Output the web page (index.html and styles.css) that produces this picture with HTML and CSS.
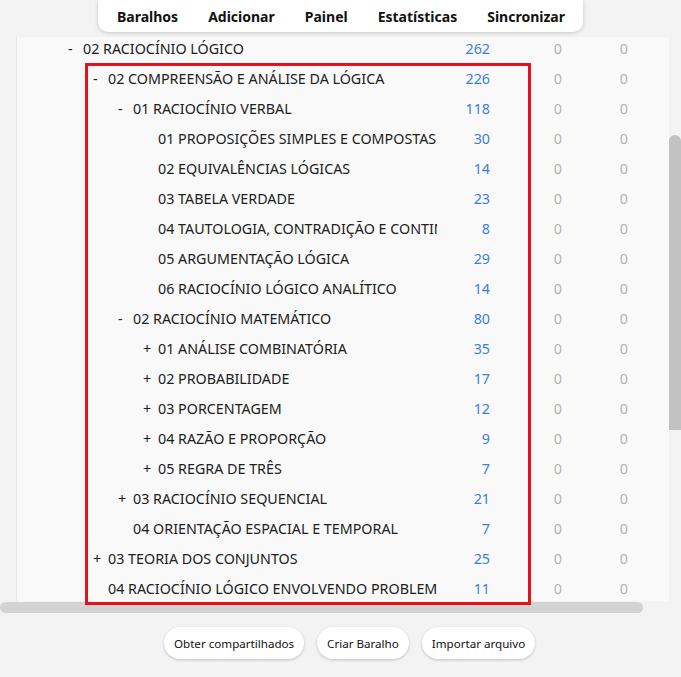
FILE: index.html
```html
<!DOCTYPE html>
<html lang="pt-BR">
<head>
<meta charset="UTF-8">
<meta name="viewport" content="width=device-width, initial-scale=1.0">
<title>Baralhos</title>
<link rel="stylesheet" href="styles.css">
</head>
<body>
<div class="page">
    <div class="main">
        <div class="topbar">
            <nav class="nav">
                <a class="nav-item">Baralhos</a>
                <a class="nav-item">Adicionar</a>
                <a class="nav-item">Painel</a>
                <a class="nav-item">Estatísticas</a>
                <a class="nav-item">Sincronizar</a>
            </nav>
        </div>

        <div class="panel">
            <div class="deck-list">
                <div class="deck-row d1"><span class="name"><span class="exp">-</span>02 RACIOCÍNIO LÓGICO</span><span class="due">262</span><span class="zero">0</span><span class="zero">0</span></div>
                <div class="deck-row d2"><span class="name"><span class="exp">-</span>02 COMPREENSÃO E ANÁLISE DA LÓGICA</span><span class="due">226</span><span class="zero">0</span><span class="zero">0</span></div>
                <div class="deck-row d3"><span class="name"><span class="exp">-</span>01 RACIOCÍNIO VERBAL</span><span class="due">118</span><span class="zero">0</span><span class="zero">0</span></div>
                <div class="deck-row d4"><span class="name"><span class="exp"></span>01 PROPOSIÇÕES SIMPLES E COMPOSTAS</span><span class="due">30</span><span class="zero">0</span><span class="zero">0</span></div>
                <div class="deck-row d4"><span class="name"><span class="exp"></span>02 EQUIVALÊNCIAS LÓGICAS</span><span class="due">14</span><span class="zero">0</span><span class="zero">0</span></div>
                <div class="deck-row d4"><span class="name"><span class="exp"></span>03 TABELA VERDADE</span><span class="due">23</span><span class="zero">0</span><span class="zero">0</span></div>
                <div class="deck-row d4"><span class="name"><span class="exp"></span>04 TAUTOLOGIA, CONTRADIÇÃO E CONTINGÊNCIA</span><span class="due">8</span><span class="zero">0</span><span class="zero">0</span></div>
                <div class="deck-row d4"><span class="name"><span class="exp"></span>05 ARGUMENTAÇÃO LÓGICA</span><span class="due">29</span><span class="zero">0</span><span class="zero">0</span></div>
                <div class="deck-row d4"><span class="name"><span class="exp"></span>06 RACIOCÍNIO LÓGICO ANALÍTICO</span><span class="due">14</span><span class="zero">0</span><span class="zero">0</span></div>
                <div class="deck-row d3"><span class="name"><span class="exp">-</span>02 RACIOCÍNIO MATEMÁTICO</span><span class="due">80</span><span class="zero">0</span><span class="zero">0</span></div>
                <div class="deck-row d4"><span class="name"><span class="exp">+</span>01 ANÁLISE COMBINATÓRIA</span><span class="due">35</span><span class="zero">0</span><span class="zero">0</span></div>
                <div class="deck-row d4"><span class="name"><span class="exp">+</span>02 PROBABILIDADE</span><span class="due">17</span><span class="zero">0</span><span class="zero">0</span></div>
                <div class="deck-row d4"><span class="name"><span class="exp">+</span>03 PORCENTAGEM</span><span class="due">12</span><span class="zero">0</span><span class="zero">0</span></div>
                <div class="deck-row d4"><span class="name"><span class="exp">+</span>04 RAZÃO E PROPORÇÃO</span><span class="due">9</span><span class="zero">0</span><span class="zero">0</span></div>
                <div class="deck-row d4"><span class="name"><span class="exp">+</span>05 REGRA DE TRÊS</span><span class="due">7</span><span class="zero">0</span><span class="zero">0</span></div>
                <div class="deck-row d3"><span class="name"><span class="exp">+</span>03 RACIOCÍNIO SEQUENCIAL</span><span class="due">21</span><span class="zero">0</span><span class="zero">0</span></div>
                <div class="deck-row d3"><span class="name"><span class="exp"></span>04 ORIENTAÇÃO ESPACIAL E TEMPORAL</span><span class="due">7</span><span class="zero">0</span><span class="zero">0</span></div>
                <div class="deck-row d2"><span class="name"><span class="exp">+</span>03 TEORIA DOS CONJUNTOS</span><span class="due">25</span><span class="zero">0</span><span class="zero">0</span></div>
                <div class="deck-row d2"><span class="name"><span class="exp"></span>04 RACIOCÍNIO LÓGICO ENVOLVENDO PROBLEMAS</span><span class="due">11</span><span class="zero">0</span><span class="zero">0</span></div>
            </div>
        </div>

        <div class="hscroll"></div>

        <div class="actions">
            <button class="btn">Obter compartilhados</button>
            <button class="btn">Criar Baralho</button>
            <button class="btn">Importar arquivo</button>
        </div>
    </div>
    <div class="vscroll"><div class="thumb"></div></div>
</div>

<div class="highlight"></div>
</body>
</html>
```

FILE: styles.css
```css
body {
    margin: 0;
    background-color: #f3f3f3;
    font-family: 'Noto Sans', 'Open Sans', sans-serif;
    color: #202020;
    overflow: hidden;
}
.page {
    display: flex;
    height: 677px;
}
.main {
    width: 669px;
}
.topbar {
    height: 37px;
}
.nav {
    display: flex;
    gap: 30px;
    width: 485px;
    height: 32px;
    margin-left: 98px;
    padding: 0 19px;
    box-sizing: border-box;
    align-items: center;
    background-color: #fff;
    border-radius: 0 0 10px 10px;
    box-shadow: 0 1px 4px rgba(0, 0, 0, 0.18);
}
.nav-item {
    font-size: 14px;
    font-weight: 700;
    color: #111;
    white-space: nowrap;
}
.panel {
    margin-left: 16px;
    width: 653px;
    height: 564px;
    overflow: hidden;
    background-color: #f9f9f9;
    border-left: 1px solid #e8e8e8;
    box-sizing: border-box;
}
.deck-list {
    margin-top: -4px;
}
.deck-row {
    display: grid;
    grid-template-columns: 420px 53px 72px 66px;
    height: 30px;
    align-items: center;
    font-size: 14.3px;
}
.name {
    display: flex;
    white-space: nowrap;
    overflow: hidden;
}
.exp {
    flex: 0 0 15px;
}
.d1 .name { padding-left: 51px; }
.d2 .name { padding-left: 76px; }
.d3 .name { padding-left: 101px; }
.d4 .name { padding-left: 126px; }
.due {
    text-align: right;
    color: #3d7fd6;
}
.zero {
    text-align: right;
    color: #b3b3b3;
}
.hscroll {
    width: 643px;
    height: 11px;
    margin-top: 1px;
    border-radius: 6px;
    background-color: #d3d3d3;
}
.actions {
    display: flex;
    gap: 13px;
    margin: 14px 0 0 164px;
}
.btn {
    height: 32px;
    padding: 0 10px;
    border: none;
    border-radius: 16px;
    background-color: #fff;
    font-family: inherit;
    font-size: 11.6px;
    color: #111;
    box-shadow: 0 1px 3px rgba(0, 0, 0, 0.22);
}
.vscroll {
    width: 12px;
}
.thumb {
    margin-top: 135px;
    height: 295px;
    border-radius: 6px 6px 0 0;
    background-color: #c2c2c2;
}
.highlight {
    position: absolute;
    left: 85px;
    top: 63px;
    width: 440px;
    height: 536px;
    border: 3px solid #e8101a;
}
```
